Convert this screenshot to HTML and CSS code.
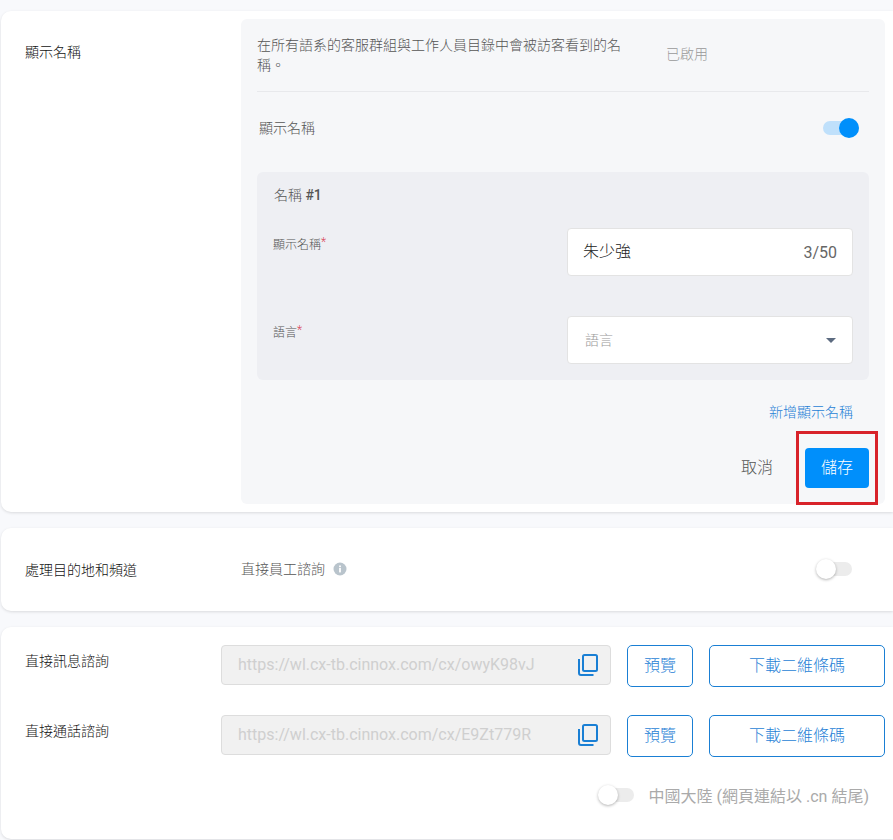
FILE: index.html
```html
<!DOCTYPE html>
<html lang="zh-Hant">
<head>
<meta charset="utf-8">
<title>顯示名稱</title>
<link rel="stylesheet" href="styles.css">
</head>
<body>
<section class="card card-name">
  <h3 class="side-label label-name">顯示名稱</h3>
  <div class="panel">
    <div class="panel-head">
      <p class="panel-desc">在所有語系的客服群組與工作人員目錄中會被訪客看到的名稱。</p>
      <span class="status">已啟用</span>
    </div>
    <div class="toggle-row">
      <span class="toggle-label">顯示名稱</span>
      <span class="switch switch-on"><i class="knob"></i></span>
    </div>
    <div class="name-box">
      <div class="name-title">名稱 <b>#1</b></div>
      <div class="field field-first">
        <label class="field-label">顯示名稱<em>*</em></label>
        <div class="input"><span class="input-value">朱少強</span><span class="count">3/50</span></div>
      </div>
      <div class="field">
        <label class="field-label">語言<em>*</em></label>
        <div class="input"><span class="placeholder">語言</span><i class="caret"></i></div>
      </div>
    </div>
    <div class="add-row"><a class="add-link">新增顯示名稱</a></div>
    <div class="actions">
      <span class="cancel">取消</span>
      <span class="save-wrap"><button class="save">儲存</button></span>
    </div>
  </div>
</section>

<section class="card card-channel">
  <h3 class="side-label">處理目的地和頻道</h3>
  <div class="channel-body">
    <span class="channel-label">直接員工諮詢</span>
    <svg class="info" viewBox="0 0 14 14" width="14" height="14"><circle cx="7" cy="7" r="6.5" fill="#b9c4cc"/><rect x="6.1" y="6" width="1.8" height="4.4" fill="#fff"/><rect x="6.1" y="3.5" width="1.8" height="1.7" fill="#fff"/></svg>
    <span class="switch switch-off channel-switch"><i class="knob"></i></span>
  </div>
</section>

<section class="card card-links">
  <div class="link-row">
    <span class="link-label">直接訊息諮詢</span>
    <div class="url-box"><span class="url">https://wl.cx-tb.cinnox.com/cx/owyK98vJ</span>
      <svg class="copy" viewBox="0 0 20 22" width="20" height="22"><path d="M1 5v14a2 2 0 0 0 2 2h12.500" fill="none" stroke="#1a7fd4" stroke-width="2"/><rect x="5" y="1" width="14" height="16" rx="1.500" fill="none" stroke="#1a7fd4" stroke-width="2"/></svg>
    </div>
    <button class="btn btn-preview">預覽</button>
    <button class="btn btn-qr">下載二維條碼</button>
  </div>
  <div class="link-row">
    <span class="link-label">直接通話諮詢</span>
    <div class="url-box"><span class="url">https://wl.cx-tb.cinnox.com/cx/E9Zt779R</span>
      <svg class="copy" viewBox="0 0 20 22" width="20" height="22"><path d="M1 5v14a2 2 0 0 0 2 2h12.500" fill="none" stroke="#1a7fd4" stroke-width="2"/><rect x="5" y="1" width="14" height="16" rx="1.500" fill="none" stroke="#1a7fd4" stroke-width="2"/></svg>
    </div>
    <button class="btn btn-preview">預覽</button>
    <button class="btn btn-qr">下載二維條碼</button>
  </div>
  <div class="china-row">
    <span class="switch switch-off"><i class="knob"></i></span>
    <span class="china-label">中國大陸 (網頁連結以 .cn 結尾)</span>
  </div>
</section>
</body>
</html>
```
FILE: styles.css
```css
* { box-sizing: border-box; }
html, body { margin: 0; padding: 0; }
body {
  width: 893px;
  height: 840px;
  overflow: hidden;
  background: #f8f9fc;
  padding-top: 11px;
  font-family: Roboto, "Noto Sans CJK TC", sans-serif;
  font-weight: 300;
  color: #333;
}
.card {
  background: #fff;
  border-radius: 10px 0 0 10px;
  margin-left: 1px;
  box-shadow: 0 1px 3px rgba(0, 0, 0, .12);
}
.card-name {
  height: 501px;
  display: flex;
  align-items: flex-start;
  padding: 8px 0 8px 24px;
  margin-bottom: 16px;
}
.side-label {
  margin: 0;
  font-size: 14px;
  font-weight: 300;
  line-height: 18px;
  color: #111;
}
.label-name { width: 216px; flex: none; padding-top: 24px; }
.panel {
  width: 644px;
  height: 485px;
  background: #f6f7f9;
  border-radius: 6px;
  padding: 0 16px;
  display: flex;
  flex-direction: column;
}
.panel-head {
  height: 73px;
  border-bottom: 1px solid #e8e9ec;
  display: flex;
  align-items: center;
}
.panel-desc {
  margin: 0;
  width: 370px;
  font-size: 14px;
  line-height: 20px;
  color: #555;
}
.status {
  margin-left: 39px;
  padding-bottom: 5px;
  font-size: 14px;
  color: #999;
}
.toggle-row {
  height: 80px;
  flex: none;
  display: flex;
  align-items: center;
  justify-content: space-between;
  padding: 0 10px 9px 2px;
}
.toggle-label { font-size: 14px; color: #555; padding-bottom: 2px; }
.switch {
  display: block;
  position: relative;
  width: 34px;
  height: 14px;
  border-radius: 7px;
  flex: none;
}
.knob {
  position: absolute;
  top: -3px;
  width: 20px;
  height: 20px;
  border-radius: 50%;
}
.switch-on { background: #bfe0fb; width: 36px; }
.switch-on .knob { right: 0; background: #008ffb; }
.switch-off { background: #ececec; }
.switch-off .knob { left: -2px; background: #fff; box-shadow: 0 1px 3px rgba(0, 0, 0, .3); }
.name-box {
  height: 208px;
  flex: none;
  background: #eeeff3;
  border-radius: 6px;
  padding: 13px 16px 0;
}
.name-title { font-size: 14px; line-height: 20px; color: #555; margin-bottom: 23px; padding-left: 1px; }
.name-title b { font-weight: 500; }
.field {
  display: flex;
  align-items: flex-start;
  justify-content: space-between;
  margin-bottom: 40px;
}
.field-label { font-size: 12px; line-height: 16px; color: #555; padding-top: 9px; font-weight: 300; }
.field-label em { color: #d9475a; font-style: normal; position: relative; top: -3px; }
.input {
  width: 286px;
  height: 48px;
  background: #fff;
  border: 1px solid #e3e3e3;
  border-radius: 4px;
  display: flex;
  align-items: center;
  justify-content: space-between;
  padding: 0 15px;
}
.input-value { font-size: 16px; color: #222; padding-bottom: 5px; }
.count { font-size: 16px; color: #666; font-weight: 400; }
.placeholder { font-size: 14px; color: #999; padding: 0 0 2px 2px; }
.caret {
  width: 0;
  height: 0;
  border-left: 5px solid transparent;
  border-right: 5px solid transparent;
  border-top: 5px solid #5c6b80;
  margin-right: 1px;
}
.add-row {
  height: 41px;
  flex: none;
  display: flex;
  align-items: flex-end;
  justify-content: flex-end;
  padding-right: 16px;
}
.add-link { font-size: 14px; line-height: 18px; color: #1f7fd6; font-weight: 300; }
.actions {
  flex: 1;
  display: flex;
  align-items: center;
  justify-content: flex-end;
  padding-top: 11px;
}
.cancel { font-size: 16px; color: #555; margin-right: 32px; padding-bottom: 4px; }
.save-wrap {
  display: block;
  outline: 3px solid #d8232a;
  padding: 14px 6px;
  margin: 0 -6px;
}
.save {
  display: block;
  width: 64px;
  height: 40px;
  border: 0;
  border-radius: 4px;
  background: #008ffb;
  color: #fff;
  font: 300 16px Roboto, "Noto Sans CJK TC", sans-serif;
  padding: 0 0 4px;
}
.card-channel {
  height: 83px;
  display: flex;
  align-items: center;
  padding-left: 24px;
  margin-bottom: 16px;
}
.card-channel .side-label { width: 216px; flex: none; }
.channel-body { flex: 1; display: flex; align-items: center; padding-right: 41px; padding-bottom: 1px; }
.channel-label { font-size: 14px; color: #555; padding-bottom: 2px; }
.info { margin-left: 8px; }
.channel-switch { margin-left: auto; }
.card-links {
  height: 212px;
  padding: 18px 8px 0 24px;
}
.link-row {
  display: flex;
  align-items: flex-start;
  margin-bottom: 28px;
  height: 42px;
}
.link-label { width: 196px; flex: none; font-size: 14px; line-height: 18px; color: #111; padding-top: 7px; font-weight: 300; }
.url-box {
  width: 390px;
  height: 40px;
  background: #f1f1f1;
  border: 1px solid #ddd;
  border-radius: 4px;
  display: flex;
  align-items: center;
  justify-content: space-between;
  padding: 0 12px 0 16px;
}
.url { font-size: 16px; font-weight: 400; color: #cfcfcf; white-space: nowrap; padding-bottom: 2px; }
.btn {
  height: 42px;
  background: #fff;
  border: 1px solid #1a7fd4;
  border-radius: 5px;
  color: #1f7fd6;
  font: 300 16px Roboto, "Noto Sans CJK TC", sans-serif;
  padding: 0 0 4px;
}
.btn-preview { width: 66px; margin-left: 16px; }
.btn-qr { width: 176px; margin-left: 16px; }
.china-row {
  display: flex;
  align-items: center;
  justify-content: flex-end;
  gap: 15px;
  padding-right: 16px;
  margin-top: -2px;
}
.china-label { font-size: 16px; color: #aaa; font-weight: 400; }
```
